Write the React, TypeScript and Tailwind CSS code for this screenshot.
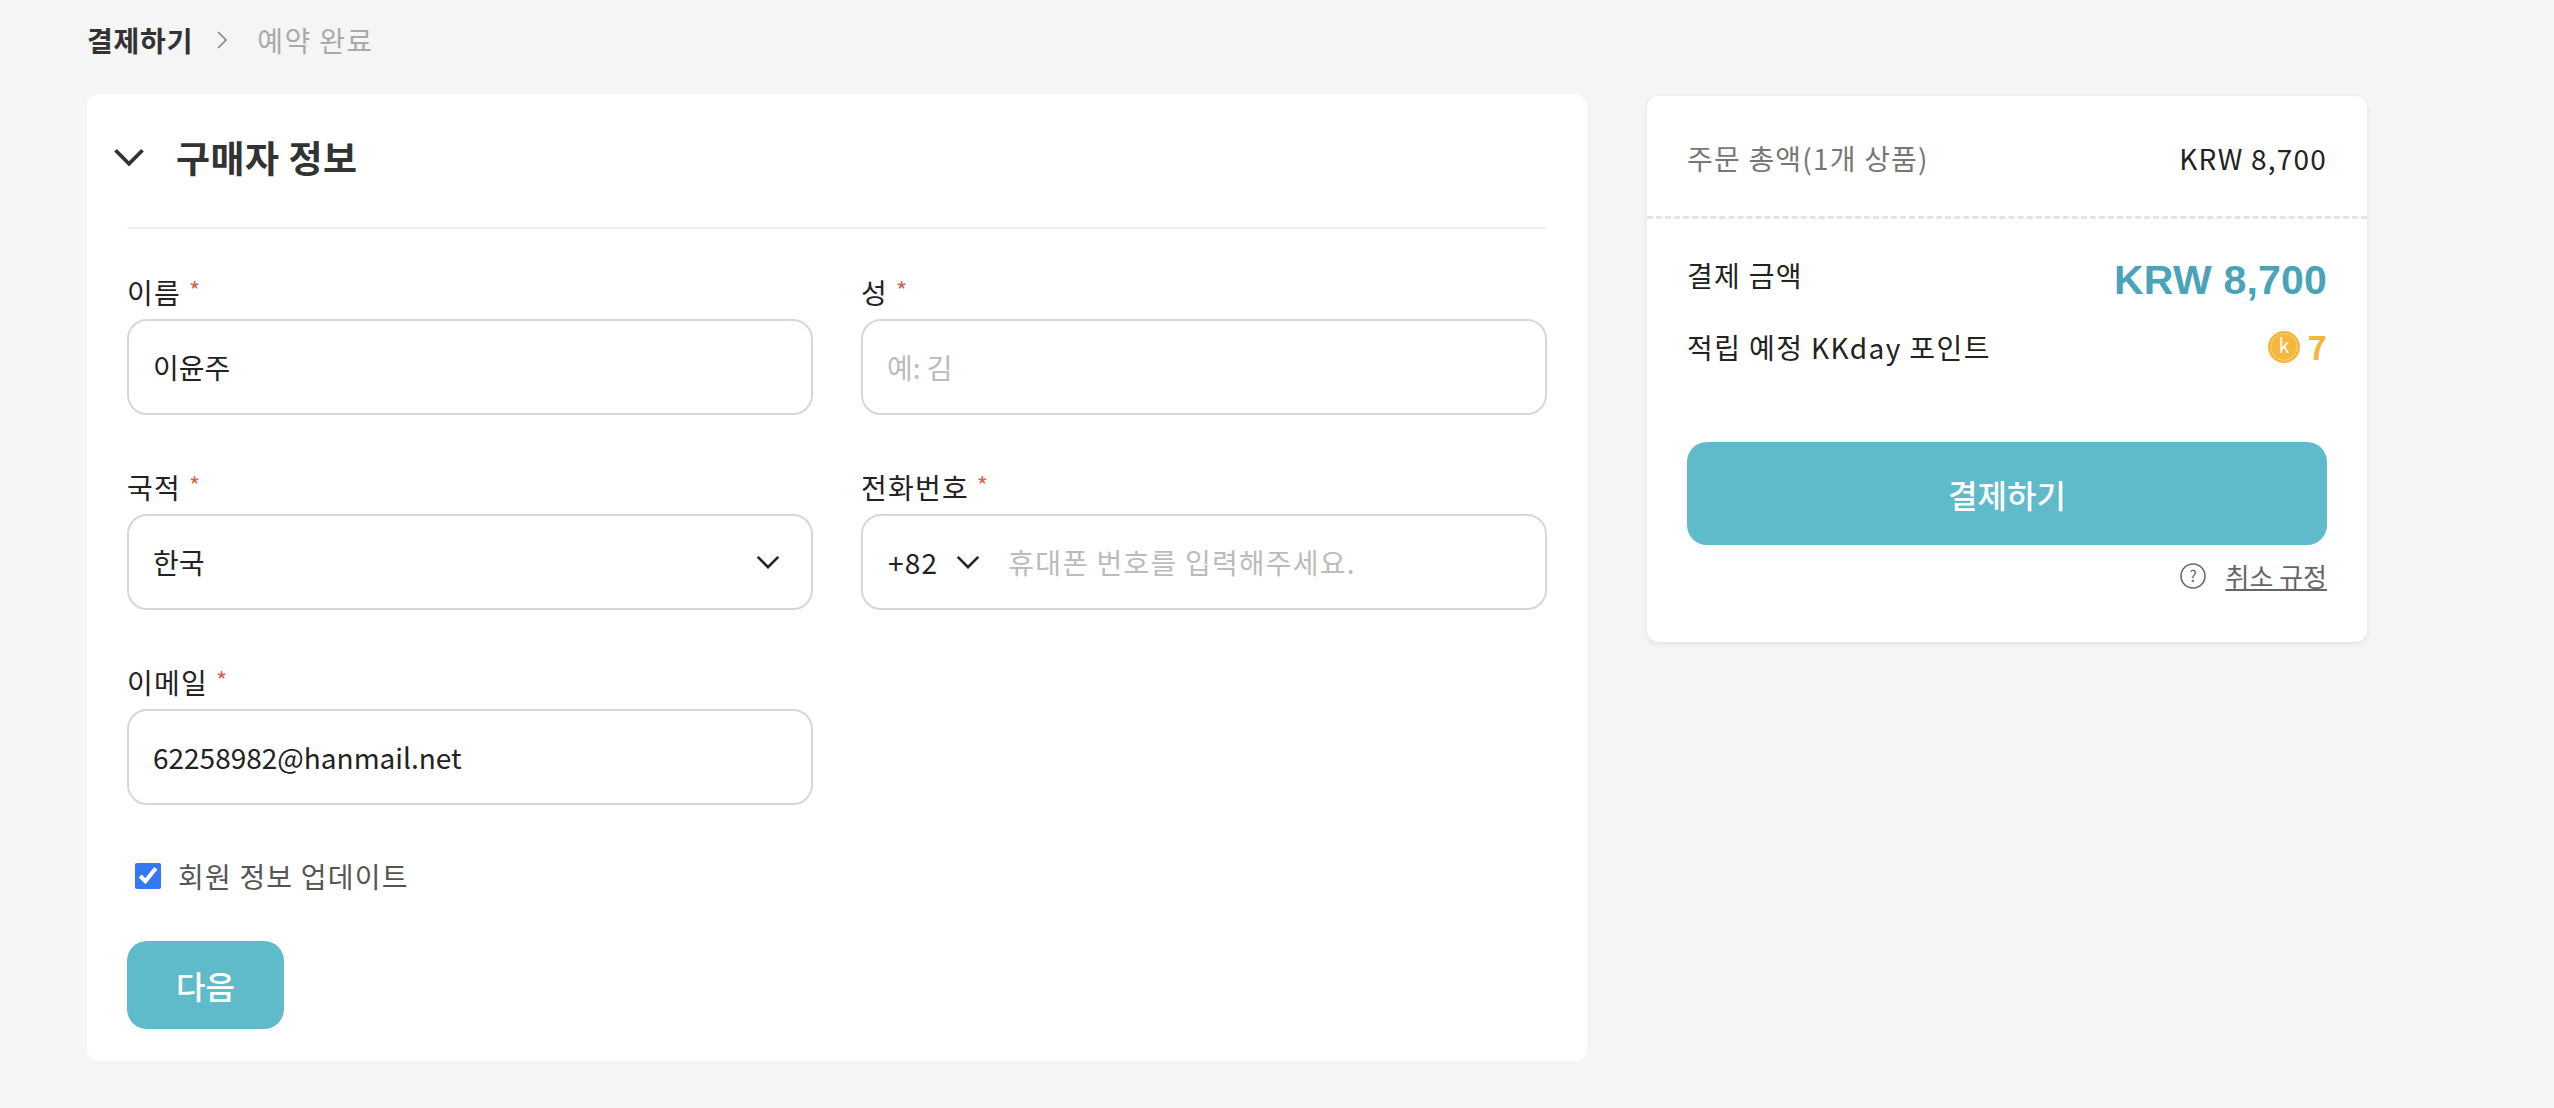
import React from "react";

const inputBox =
  "w-full h-[96px] rounded-[20px] border-2 border-[#d6d6dc] bg-white px-[24px] text-[28px] text-[#222222] outline-none placeholder:text-[#bbbbbb]";

function Chevron({ className, width = 3 }: { className: string; width?: number }) {
  return (
    <svg viewBox="0 0 28 16" fill="none" className={className}>
      <path d="M2 2 L14 14 L26 2" stroke="currentColor" strokeWidth={width} />
    </svg>
  );
}

function Field({ label, children }: { label: string; children: React.ReactNode }) {
  return (
    <div className="flex flex-col">
      <label className="h-[40px] flex items-start text-[28px] leading-[42px] tracking-[1.2px] text-[#222222]">
        {label}
        <span className="ml-[8px] text-[24px] leading-[38px] text-[#d9604f]">*</span>
      </label>
      <div className="mt-[8px]">{children}</div>
    </div>
  );
}

function Coin() {
  return (
    <svg viewBox="0 0 32 32" className="w-[32px] h-[32px]">
      <circle cx="16" cy="16" r="16" fill="#f5b63c" />
      <circle cx="16" cy="16" r="13" fill="none" stroke="#ffffff" strokeWidth="0.8" strokeDasharray="1.5 1.5" />
      <text x="16" y="22" textAnchor="middle" fontSize="19" fill="#ffffff">
        k
      </text>
    </svg>
  );
}

export default function App() {
  return (
    <div className="min-h-screen bg-[#f5f5f5] pl-[87px] font-['Noto_Sans_CJK_KR',sans-serif]">
      <div className="h-[94px] pb-[14px] flex items-center text-[28px]">
        <span className="font-bold tracking-[0.8px] text-[#333333]">결제하기</span>
        <svg viewBox="0 0 10 18" fill="none" className="ml-[24px] w-[10px] h-[18px] text-[#888888]">
          <path d="M1 1 L9 9 L1 17" stroke="currentColor" strokeWidth="1.6" />
        </svg>
        <span className="ml-[30px] tracking-[1.4px] text-[#aaaaaa]">예약 완료</span>
      </div>

      <div className="flex items-start gap-[60px]">
        <div className="w-[1500px] h-[967px] rounded-[12px] bg-white px-[40px]">
          <div className="h-[135px] border-b-2 border-[#f0f0f0] relative flex items-center">
            <Chevron className="absolute left-[-14px] top-[54px] w-[32px] h-[18px] text-[#333333]" width={3.4} />
            <h2 className="ml-[49px] mb-[6px] text-[37px] font-bold tracking-[0.5px] text-[#333333]">구매자 정보</h2>
          </div>

          <div className="mt-[42px] grid grid-cols-2 gap-x-[48px] gap-y-[51px]">
            <Field label="이름">
              <input className={inputBox} defaultValue="이윤주" />
            </Field>
            <Field label="성">
              <input className={inputBox} placeholder="예: 김" />
            </Field>
            <Field label="국적">
              <div className={inputBox + " flex items-center justify-between"}>
                <span>한국</span>
                <Chevron className="w-[24px] h-[14px] mr-[7px] text-[#222222]" />
              </div>
            </Field>
            <Field label="전화번호">
              <div className={inputBox + " flex items-center"}>
                <span className="ml-[1px] tracking-[1.2px]">+82</span>
                <Chevron className="ml-[18px] w-[24px] h-[14px] text-[#222222]" />
                <input
                  className="ml-[28px] flex-1 min-w-0 tracking-[1.2px] outline-none placeholder:text-[#bbbbbb]"
                  placeholder="휴대폰 번호를 입력해주세요."
                />
              </div>
            </Field>
            <Field label="이메일">
              <input className={inputBox} defaultValue="62258982@hanmail.net" />
            </Field>
          </div>

          <label className="mt-[50px] ml-[8px] flex items-center">
            <input type="checkbox" defaultChecked className="w-[26px] h-[26px] accent-[#3478f6]" />
            <span className="ml-[17px] text-[28px] tracking-[1.2px] text-[#555555]">회원 정보 업데이트</span>
          </label>

          <button className="mt-[44px] w-[157px] h-[88px] rounded-[20px] bg-[#5fbbc9] text-[32px] font-medium text-white">
            다음
          </button>
        </div>

        <div className="mt-[2px] w-[720px] h-[546px] rounded-[12px] bg-white shadow-[0_2px_6px_rgba(0,0,0,0.08)]">
          <div className="h-[123px] px-[40px] pt-[4px] flex items-center justify-between border-b-[3px] border-dashed border-[#e2e2e8] text-[28px] tracking-[1.2px]">
            <span className="text-[#777777]">주문 총액(1개 상품)</span>
            <span className="text-[#222222]">KRW 8,700</span>
          </div>

          <div className="px-[40px]">
            <div className="mt-[30px] h-[62px] flex items-start justify-between">
              <span className="text-[28px] leading-[53px] tracking-[1.3px] text-[#222222]">결제 금액</span>
              <span className="font-['Liberation_Sans',sans-serif] font-bold text-[41px] leading-[62px] tracking-[0.2px] text-[#4aa3b8]">
                KRW 8,700
              </span>
            </div>
            <div className="mt-[6px] h-[60px] flex items-center justify-between">
              <span className="text-[28px] tracking-[1.4px] text-[#222222]">적립 예정 KKday 포인트</span>
              <span className="flex items-center gap-[8px]">
                <Coin />
                <span className="text-[33px] font-bold text-[#f5b63c]">7</span>
              </span>
            </div>

            <button className="mt-[65px] w-full h-[103px] rounded-[20px] bg-[#5fbbc9] text-[32px] font-medium text-white">
              결제하기
            </button>

            <div className="mt-[11px] flex items-center justify-end">
              <svg viewBox="0 0 26 26" fill="none" className="w-[26px] h-[26px] text-[#666666]">
                <circle cx="13" cy="13" r="12" stroke="currentColor" strokeWidth="1.6" />
                <text x="13" y="19" textAnchor="middle" fontSize="16" fill="currentColor">
                  ?
                </text>
              </svg>
              <span className="ml-[19px] text-[26px] text-[#666666] underline">취소 규정</span>
            </div>
          </div>
        </div>
      </div>
    </div>
  );
}
